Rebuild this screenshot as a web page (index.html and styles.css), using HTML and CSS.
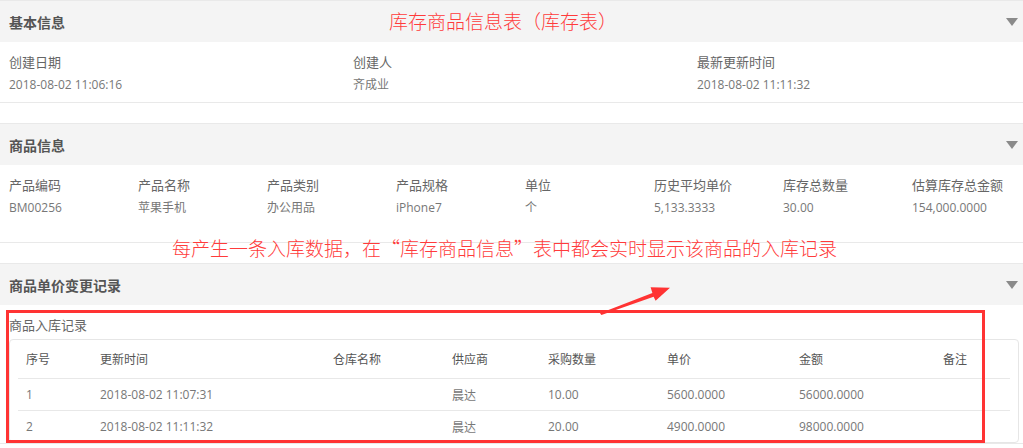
FILE: index.html
```html
<!DOCTYPE html>
<html>

<head>
    <meta charset="utf-8">
    <link rel="stylesheet" href="styles.css">
</head>

<body>
    <div class="page">
        <section class="panel">
            <div class="panel-head">
                <h3 class="panel-title">基本信息</h3>
                <span class="caret"></span>
            </div>
            <div class="panel-body fields cols-3">
                <div class="field">
                    <div class="field-label">创建日期</div>
                    <div class="field-value">2018-08-02 11:06:16</div>
                </div>
                <div class="field">
                    <div class="field-label">创建人</div>
                    <div class="field-value">齐成业</div>
                </div>
                <div class="field">
                    <div class="field-label">最新更新时间</div>
                    <div class="field-value">2018-08-02 11:11:32</div>
                </div>
            </div>
        </section>

        <section class="panel">
            <div class="panel-head">
                <h3 class="panel-title">商品信息</h3>
                <span class="caret"></span>
            </div>
            <div class="panel-body panel-body-tall fields cols-8">
                <div class="field">
                    <div class="field-label">产品编码</div>
                    <div class="field-value">BM00256</div>
                </div>
                <div class="field">
                    <div class="field-label">产品名称</div>
                    <div class="field-value">苹果手机</div>
                </div>
                <div class="field">
                    <div class="field-label">产品类别</div>
                    <div class="field-value">办公用品</div>
                </div>
                <div class="field">
                    <div class="field-label">产品规格</div>
                    <div class="field-value">iPhone7</div>
                </div>
                <div class="field">
                    <div class="field-label">单位</div>
                    <div class="field-value">个</div>
                </div>
                <div class="field">
                    <div class="field-label">历史平均单价</div>
                    <div class="field-value">5,133.3333</div>
                </div>
                <div class="field">
                    <div class="field-label">库存总数量</div>
                    <div class="field-value">30.00</div>
                </div>
                <div class="field">
                    <div class="field-label">估算库存总金额</div>
                    <div class="field-value">154,000.0000</div>
                </div>
            </div>
        </section>

        <section class="panel">
            <div class="panel-head">
                <h3 class="panel-title">商品单价变更记录</h3>
                <span class="caret"></span>
            </div>
            <div class="panel-body records">
                <div class="records-title">商品入库记录</div>
                <div class="table-card">
                    <div class="trow thead">
                        <div class="cell">序号</div>
                        <div class="cell">更新时间</div>
                        <div class="cell">仓库名称</div>
                        <div class="cell">供应商</div>
                        <div class="cell">采购数量</div>
                        <div class="cell">单价</div>
                        <div class="cell">金额</div>
                        <div class="cell">备注</div>
                    </div>
                    <div class="trow">
                        <div class="cell">1</div>
                        <div class="cell">2018-08-02 11:07:31</div>
                        <div class="cell"></div>
                        <div class="cell">晨达</div>
                        <div class="cell">10.00</div>
                        <div class="cell">5600.0000</div>
                        <div class="cell">56000.0000</div>
                        <div class="cell"></div>
                    </div>
                    <div class="trow">
                        <div class="cell">2</div>
                        <div class="cell">2018-08-02 11:11:32</div>
                        <div class="cell"></div>
                        <div class="cell">晨达</div>
                        <div class="cell">20.00</div>
                        <div class="cell">4900.0000</div>
                        <div class="cell">98000.0000</div>
                        <div class="cell"></div>
                    </div>
                </div>
            </div>
        </section>

        <!-- annotations drawn over the page -->
        <div class="note note-top">库存商品信息表（库存表）</div>
        <div class="note note-mid">每产生一条入库数据，在“库存商品信息”表中都会实时显示该商品的入库记录</div>
        <div class="mark-box"></div>
        <svg class="mark-arrow" width="1023" height="448" viewBox="0 0 1023 448">
            <polygon fill="#ff3333"
                points="600,313.2 652.4,293 650.6,287.2 670,287.8 655.6,300.8 653.6,296.8 601.4,315" />
        </svg>
    </div>
</body>

</html>
```

FILE: styles.css
```css
body {
    margin: 0;
    font-family: 'Open Sans', 'Noto Sans CJK SC', sans-serif;
    background: #fff;
    color: #666;
}

.page {
    position: relative;
    width: 1023px;
    height: 448px;
    overflow: hidden;
}

.panel {
    margin-bottom: 20px;
    border-bottom: 1px solid #e9e9e9;
}

.panel-head {
    display: flex;
    justify-content: space-between;
    align-items: center;
    height: 41px;
    padding: 0 5px 0 9px;
    background: #f4f4f4;
    border-top: 1px solid #e9e9e9;
}

.panel-title {
    margin: 0;
    font-size: 14px;
    font-weight: 700;
    color: #555;
}

.caret {
    width: 0;
    height: 0;
    border-left: 6px solid transparent;
    border-right: 6px solid transparent;
    border-top: 8px solid #8a8a8a;
}

.panel-body {
    padding: 10px 0 7px 9px;
}

.panel-body-tall {
    padding-bottom: 24px;
}

.fields {
    display: grid;
}

.cols-3 {
    grid-template-columns: repeat(3, 344px);
}

.cols-8 {
    grid-template-columns: repeat(8, 129px);
}

.field-label {
    font-size: 13px;
    line-height: 20px;
    color: #666;
}

.field-value {
    margin-top: 3px;
    font-size: 12px;
    line-height: 20px;
    color: #777;
}

.records {
    padding: 10px 4px 0 9px;
}

.records-title {
    font-size: 13px;
    line-height: 20px;
    color: #666;
}

.table-card {
    margin-top: 4px;
    padding: 0 8px;
    border: 1px solid #e6e6e6;
    border-radius: 4px;
}

.trow {
    display: grid;
    grid-template-columns: 74px 233px 119px 96px 119px 132px 144px 76px;
    height: 31px;
    align-items: center;
    border-top: 1px solid #e8e8e8;
    font-size: 12px;
    color: #777;
}

.trow.thead {
    height: 38px;
    border-top: none;
    color: #555;
}

.cell {
    padding-left: 8px;
    white-space: nowrap;
}

.note {
    position: absolute;
    color: #ff3b3b;
    white-space: nowrap;
    line-height: 1;
    font-size: 19px;
    font-family: 'Noto Sans CJK SC', sans-serif;
    font-weight: 300;
}

.note-top {
    left: 389px;
    top: 11px;
}

.note-mid {
    left: 172px;
    top: 238px;
}

.mark-box {
    position: absolute;
    left: 6px;
    top: 310px;
    width: 973px;
    height: 127px;
    border: 3px solid #ff3333;
}

.mark-arrow {
    position: absolute;
    left: 0;
    top: 0;
    pointer-events: none;
}
```
